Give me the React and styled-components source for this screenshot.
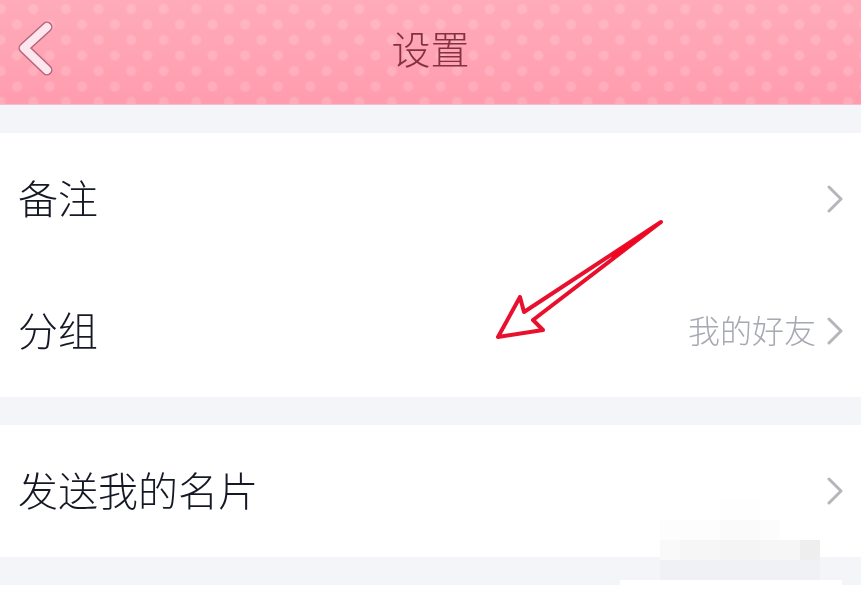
import React from "react";
import styled, { createGlobalStyle } from "styled-components";

const Global = createGlobalStyle`
  html, body { margin: 0; padding: 0; background: #f3f5f9; }
  body { font-family: "Noto Sans CJK SC", "Noto Sans", sans-serif; }
`;

const Page = styled.div`
  position: relative;
  width: 861px;
  height: 595px;
  overflow: hidden;
  background: #f3f5f9;
  filter: blur(0.35px);
`;

const Header = styled.header`
  height: 105px;
  box-sizing: border-box;
  display: flex;
  align-items: center;
  justify-content: center;
  position: relative;
  background-color: #ff9dae;
  background-image:
    radial-gradient(circle, rgba(255, 255, 255, 0.15) 0 4px, rgba(255, 255, 255, 0) 6px),
    radial-gradient(circle, rgba(255, 255, 255, 0.15) 0 4px, rgba(255, 255, 255, 0) 6px),
    linear-gradient(180deg, #ffabb9 0%, #ffa3b3 55%, #ff9cae 100%);
  background-size: 32.6px 31px, 32.6px 31px, 100% 100%;
  background-position: 17px -6.5px, 0.7px 9px, 0 0;
  border-bottom: 1px solid #f7bcc9;
`;

const Title = styled.h1`
  margin: 0;
  font-size: 39px;
  font-weight: 300;
  line-height: 1;
  color: #83303f;
  transform: translateY(-5px);
`;

const Back = styled.svg`
  position: absolute;
  left: 0;
  top: 0;
  width: 70px;
  height: 105px;
`;

const Group = styled.section`
  margin-top: 28px;
  background: #ffffff;
`;

const Row = styled.div`
  height: 132px;
  box-sizing: border-box;
  padding: 0 18px 4px;
  display: flex;
  align-items: center;
  justify-content: space-between;
`;

const Label = styled.span`
  font-size: 40px;
  font-weight: 300;
  line-height: 1;
  color: #151825;
`;

const Right = styled.div`
  display: flex;
  align-items: center;
  gap: 10px;
`;

const Value = styled.span`
  font-size: 32px;
  font-weight: 300;
  line-height: 1;
  color: #a6a9b1;
`;

const Chevron = styled.svg`
  width: 17px;
  height: 28px;
  display: block;
  transform: translate(1px, 2px);
`;

const Arrow = styled.svg`
  position: absolute;
  left: 490px;
  top: 215px;
  width: 180px;
  height: 130px;
`;

const Mosaic = styled.svg`
  position: absolute;
  left: 620px;
  top: 490px;
  width: 241px;
  height: 105px;
`;

const mosaicBlocks = [
  [100, 10, 40, 20, "#fefefe"],
  [40, 30, 60, 20, "#fdfdfd"],
  [100, 30, 40, 20, "#fafafa"],
  [140, 30, 20, 20, "#fcfcfc"],
  [40, 50, 20, 20, "#f9f9f9"],
  [60, 50, 40, 20, "#f6f6f6"],
  [100, 50, 40, 20, "#f4f4f4"],
  [140, 50, 40, 20, "#f6f6f6"],
  [180, 50, 20, 20, "#eeeeee"],
  [40, 70, 160, 20, "#eff1f4"],
  [0, 90, 222, 6, "#ffffff"],
];

const Chev = () => (
  <Chevron viewBox="0 0 17 28">
    <path d="M2 2 L14 14 L2 26" fill="none" stroke="#b4b6bc" strokeWidth="3" strokeLinecap="round" strokeLinejoin="round" />
  </Chevron>
);

export default function App() {
  return (
    <Page>
      <Global />
      <Header>
        <Back viewBox="0 0 70 105">
          <path d="M47 27 L24 48 L47 70" fill="none" stroke="#b5667d" strokeWidth="11" strokeLinecap="round" strokeLinejoin="round" />
          <path d="M47 27 L24 48 L47 70" fill="none" stroke="#fde6ee" strokeWidth="8" strokeLinecap="round" strokeLinejoin="round" />
        </Back>
        <Title>设置</Title>
      </Header>
      <Group>
        <Row>
          <Label>备注</Label>
          <Right><Chev /></Right>
        </Row>
        <Row>
          <Label>分组</Label>
          <Right><Value>我的好友</Value><Chev /></Right>
        </Row>
      </Group>
      <Group>
        <Row>
          <Label>发送我的名片</Label>
          <Right><Chev /></Right>
        </Row>
      </Group>
      <Group>
        <Row />
      </Group>
      <Arrow viewBox="490 215 180 130">
        <path
          d="M661 222 L524 312 L520 297 L498 337 L543 330 L533 320 Z"
          fill="#ffffff"
          stroke="#e8102c"
          strokeWidth="4"
          strokeLinejoin="round"
        />
        <path d="M661 222 L612 254 L612 259.5 Z" fill="#f0061f" stroke="#f0061f" strokeWidth="1" />
      </Arrow>
      <Mosaic viewBox="0 0 241 105">
        {mosaicBlocks.map(([x, y, w, h, fill], i) => (
          <rect key={i} x={x} y={y} width={w} height={h} fill={fill} />
        ))}
      </Mosaic>
    </Page>
  );
}
